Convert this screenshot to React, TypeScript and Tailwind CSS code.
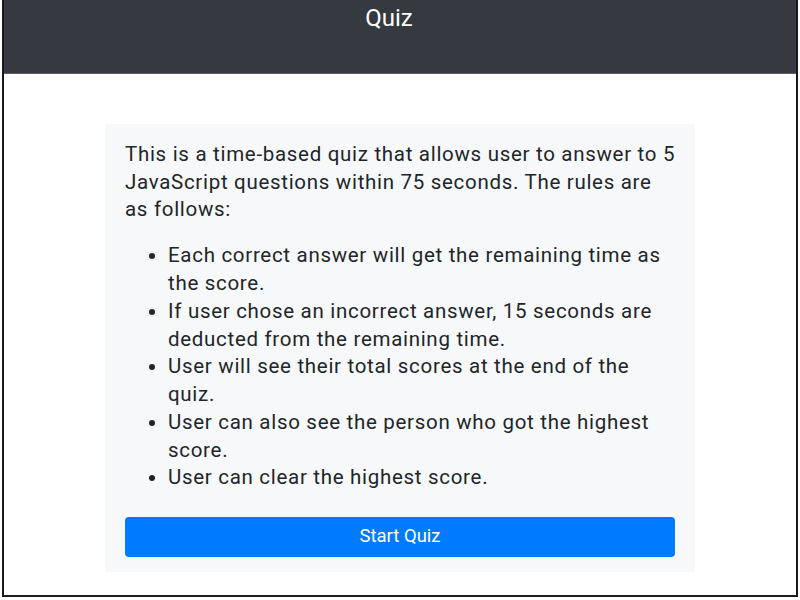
export default function App() {
  const rules = [
    "Each correct answer will get the remaining time as the score.",
    "If user chose an incorrect answer, 15 seconds are deducted from the remaining time.",
    "User will see their total scores at the end of the quiz.",
    "User can also see the person who got the highest score.",
    "User can clear the highest score.",
  ];

  return (
    <div className="w-[800px] h-[600px] bg-white pl-[2px] pr-[2px] pb-[3px]">
      <div
        className="h-full border-2 border-t-0 border-[#1a1a1a] flex flex-col text-[#212529]"
        style={{ fontFamily: "Roboto, 'Noto Sans', sans-serif" }}
      >
        <header className="h-[74px] bg-[#343a40] border-b border-[#5a5f64] flex justify-center pt-[3px] pr-[22px]">
          <h1 className="text-white text-[24px] leading-[30px] font-normal">Quiz</h1>
        </header>

        <main className="flex-1 flex justify-center pt-[50px]">
          <div className="w-[590px] h-[448px] bg-[#f7f8f9] px-[20px] pt-[17px]">
            <p className="text-[20.5px] leading-[27.7px] tracking-[0.7px] -mr-[4px]">
              This is a time-based quiz that allows user to answer to 5 JavaScript questions within 75
              seconds. The rules are as follows:
            </p>
            <ul className="list-disc pl-[43px] mt-[18px] text-[20.5px] leading-[27.8px] tracking-[0.7px]">
              {rules.map((r) => (
                <li key={r}>{r}</li>
              ))}
            </ul>
            <button className="mt-[25px] w-full h-[40px] rounded-[4px] bg-[#007bff] text-white text-[18.5px]">
              Start Quiz
            </button>
          </div>
        </main>
      </div>
    </div>
  );
}
